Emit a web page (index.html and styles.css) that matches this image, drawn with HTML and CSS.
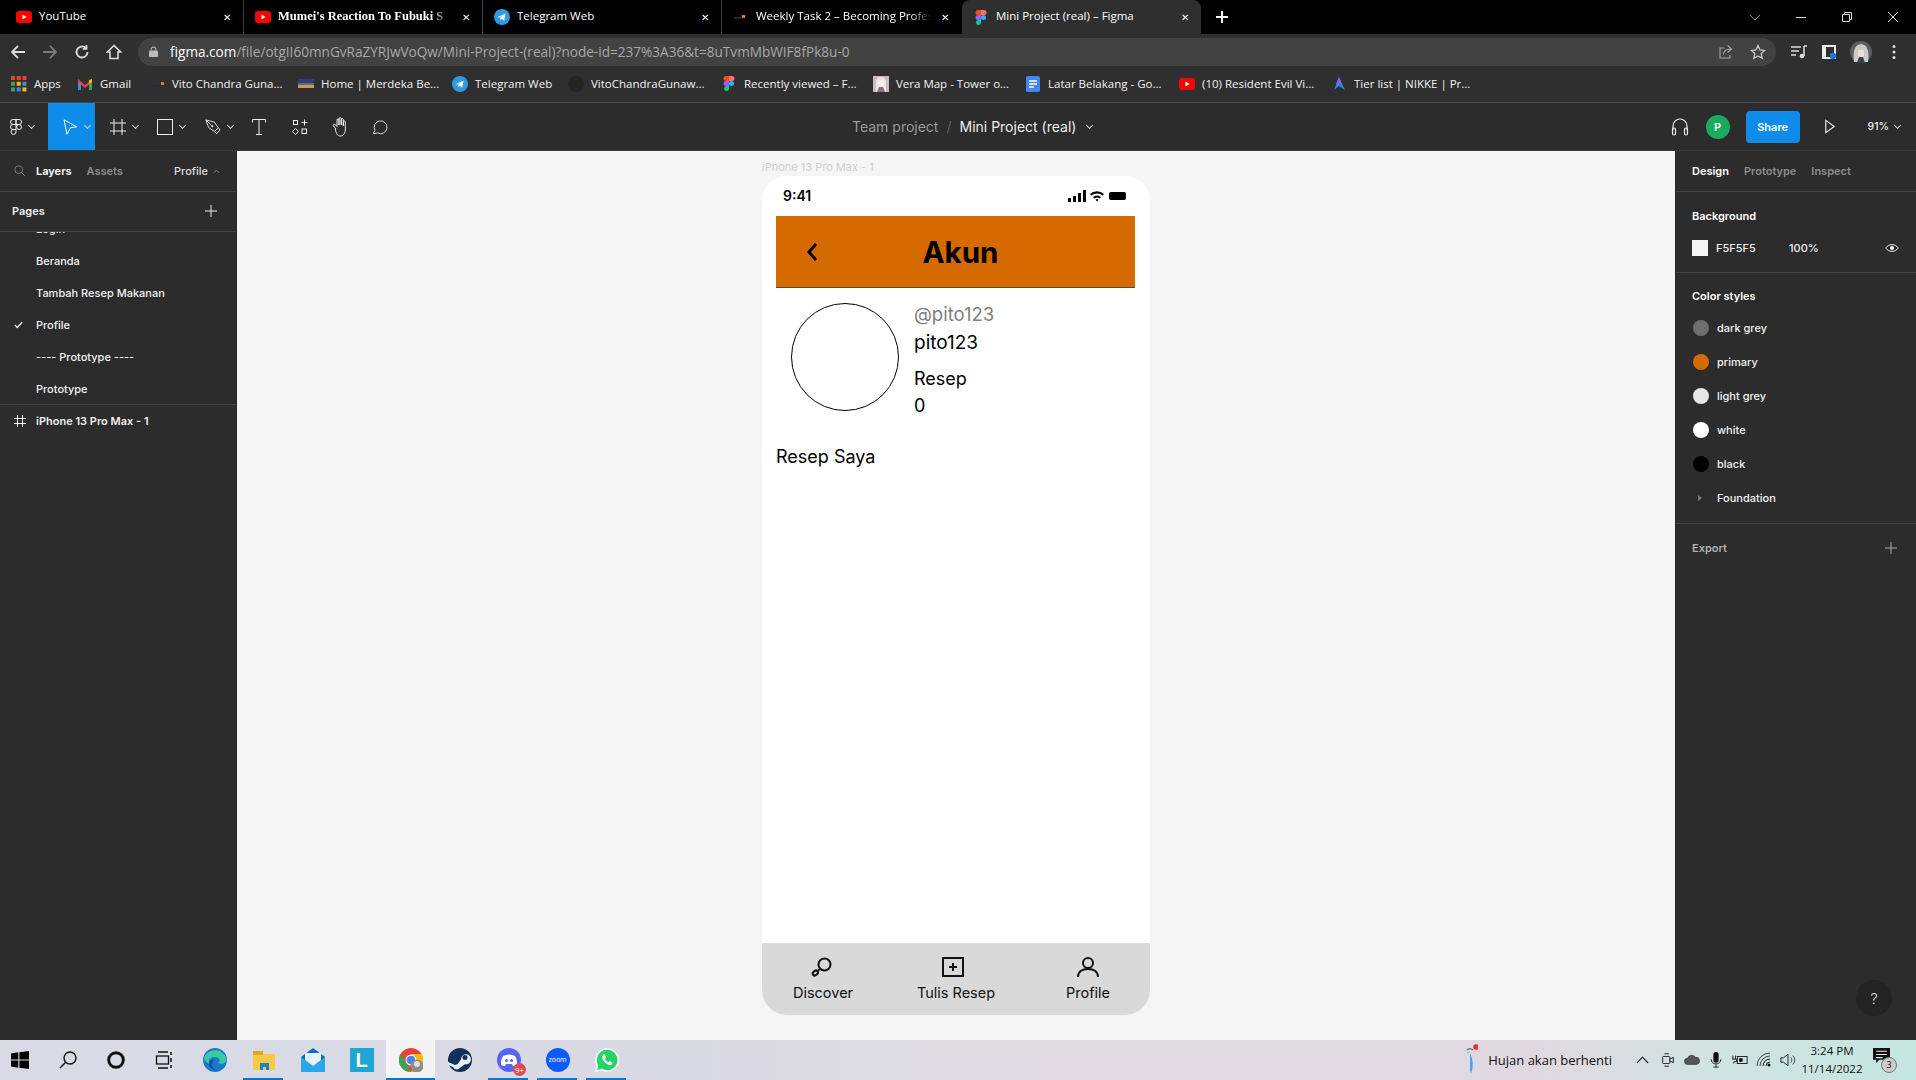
FILE: index.html
```html
<!DOCTYPE html>
<html lang="en">
<head>
  <meta charset="UTF-8" />
  <title>Mini Project (real) – Figma</title>
  <link rel="stylesheet" href="styles.css">
</head>
<body>
  <!-- browser tabs -->
  <div class="tabstrip">
    <div class="tab">
      <svg class="fav" viewBox="0 0 16 16"><rect y="2" width="16" height="12" rx="3" fill="#f00"/><path d="M6.500 5.500v5l4-2.500z" fill="#fff"/></svg>
      <span class="tab-title">YouTube</span><span class="tab-x">✕</span>
    </div>
    <div class="tab">
      <svg class="fav" viewBox="0 0 16 16"><rect y="2" width="16" height="12" rx="3" fill="#f00"/><path d="M6.500 5.500v5l4-2.500z" fill="#fff"/></svg>
      <span class="tab-title tab-title-serif tab-fade">Mumei's Reaction To Fubuki S</span><span class="tab-x">✕</span>
    </div>
    <div class="tab">
      <svg class="fav" viewBox="0 0 16 16"><circle cx="8" cy="8" r="8" fill="#2f9be3"/><path d="M3.500 8l8-3.300-1.300 7-2.500-1.800-1.200 1.200-.3-2.300 3.300-2.800-4.200 2.600z" fill="#fff"/></svg>
      <span class="tab-title">Telegram Web</span><span class="tab-x">✕</span>
    </div>
    <div class="tab tab-last">
      <svg class="fav" viewBox="0 0 16 16"><rect x="1" y="8" width="7" height="1.500" fill="#2b3350"/><rect x="9" y="6" width="3" height="3" fill="#e8762c"/></svg>
      <span class="tab-title tab-fade">Weekly Task 2 – Becoming Profes</span><span class="tab-x">✕</span>
    </div>
    <div class="tab tab-active">
      <svg class="fav" viewBox="0 0 16 16"><path d="M5 1h3v5H5a2.500 2.500 0 0 1 0-5z" fill="#f24e1e"/><path d="M8 1h3a2.500 2.500 0 0 1 0 5H8z" fill="#ff7262"/><path d="M5 6h3v5H5a2.500 2.500 0 0 1 0-5z" fill="#a259ff"/><circle cx="10.500" cy="8.500" r="2.500" fill="#1abcfe"/><path d="M5 11h3v2.500a2.500 2.500 0 1 1-3-2.500z" fill="#0acf83"/></svg>
      <span class="tab-title">Mini Project (real) – Figma</span><span class="tab-x">✕</span>
    </div>
    <svg class="tab-plus" viewBox="0 0 14 14"><path d="M7 1v12M1 7h12" stroke="#fff" stroke-width="2"/></svg>
    <div class="win-btns">
      <svg viewBox="0 0 12 12"><path d="M1 4l5 5 5-5" fill="none" stroke="#888" stroke-width="1"/></svg>
      <svg viewBox="0 0 12 12"><path d="M1 6.500h10" stroke="#ddd" stroke-width="1"/></svg>
      <svg viewBox="0 0 12 12"><path d="M1.500 3.500h7v7h-7zM3.500 3.500v-2h7v7h-2" fill="none" stroke="#ddd" stroke-width="1"/></svg>
      <svg viewBox="0 0 12 12"><path d="M1 1l10 10M11 1L1 11" stroke="#ddd" stroke-width="1"/></svg>
    </div>
  </div>

  <!-- address bar -->
  <div class="navbar">
    <div class="nav-btns">
      <svg viewBox="0 0 16 16"><path d="M15 8H2M8 2L2 8l6 6" fill="none" stroke="#dcdcdc" stroke-width="1.800"/></svg>
      <svg viewBox="0 0 16 16"><path d="M1 8h13M8 2l6 6-6 6" fill="none" stroke="#7a7a7a" stroke-width="1.800"/></svg>
      <svg viewBox="0 0 16 16"><path d="M13.500 8a5.500 5.500 0 1 1-1.700-4M12.500 1v3.800H8.700" fill="none" stroke="#dcdcdc" stroke-width="1.800"/></svg>
      <svg viewBox="0 0 16 16"><path d="M8 1.500L1.500 8H4v6.500h8V8h2.500z" fill="none" stroke="#dcdcdc" stroke-width="1.600"/></svg>
    </div>
    <div class="omnibox">
      <svg class="lock" viewBox="0 0 10 12"><rect y="5" width="10" height="7" rx="1" fill="#bbb"/><path d="M2.500 5V3.500a2.500 2.500 0 0 1 5 0V5" fill="none" stroke="#bbb" stroke-width="1.200"/></svg>
      <span class="url"><b>figma.com</b>/file/otgII60mnGvRaZYRJwVoQw/Mini-Project-(real)?node-id=237%3A36&amp;t=8uTvmMbWIF8fPk8u-0</span>
      <svg class="omni-ico" viewBox="0 0 16 16"><path d="M6 4H2v10h10v-3M5.500 10.500c0-3.500 3-5.500 7.500-5.500M9.500 1.500L13.500 5l-4 3.500" fill="none" stroke="#aaa" stroke-width="1.100"/></svg>
      <svg class="omni-ico" viewBox="0 0 16 16"><path d="M8 1.500l2 4.400 4.700.5-3.500 3.200 1 4.700L8 11.900l-4.200 2.400 1-4.700L1.300 6.400 6 5.900z" fill="none" stroke="#ccc" stroke-width="1.300"/></svg>
    </div>
    <div class="nav-right">
      <svg viewBox="0 0 16 16"><path d="M0 3h10M0 7h8M0 11h5M13 2v10M13 2h3" fill="none" stroke="#ddd" stroke-width="1.500"/><circle cx="11" cy="12" r="2.300" fill="#ddd"/></svg>
      <svg viewBox="0 0 16 16"><path d="M1 1h14v14H1z" fill="#eee"/><path d="M5 3h8v7H9v3H5z" fill="#2f2f2f"/><circle cx="12" cy="12" r="3.200" fill="#1a73e8"/></svg>
      <svg class="user-pic" viewBox="0 0 22 22"><circle cx="11" cy="11" r="11" fill="#5c5f60"/><path d="M4 21c-1-8-1-17 7-18 8 1 8 10 7 18z" fill="#c9cccb"/><path d="M8 9h6v6l-3 2-3-2z" fill="#f0dcd2"/><path d="M7 22l2-6h4l2 6z" fill="#3b3f48"/></svg>
      <svg viewBox="0 0 16 16"><circle cx="8" cy="2.500" r="1.500" fill="#ddd"/><circle cx="8" cy="8" r="1.500" fill="#ddd"/><circle cx="8" cy="13.500" r="1.500" fill="#ddd"/></svg>
    </div>
  </div>

  <!-- bookmarks -->
  <div class="bookmarks">
    <div class="bm"><svg viewBox="0 0 14 14"><g fill="#ea4335"><rect width="3.500" height="3.500"/><rect x="5" width="3.500" height="3.500"/><rect x="10" width="3.500" height="3.500"/></g><rect y="5" width="3.500" height="3.500" fill="#34a853"/><rect x="5" y="5" width="3.500" height="3.500" fill="#fbbc04"/><rect x="10" y="5" width="3.500" height="3.500" fill="#4285f4"/><rect y="10" width="3.500" height="3.500" fill="#34a853"/><rect x="5" y="10" width="3.500" height="3.500" fill="#4285f4"/><rect x="10" y="10" width="3.500" height="3.500" fill="#fbbc04"/></svg>Apps</div>
    <div class="bm"><svg viewBox="0 0 16 16"><path d="M1 3v11h3V7z" fill="#4285f4"/><path d="M15 3v11h-3V7z" fill="#34a853"/><path d="M1 3l7 6 7-6v3l-7 6-7-6z" fill="#ea4335"/><path d="M12 4l3-1v3l-3 2z" fill="#fbbc04"/></svg>Gmail</div>
    <div class="bm"><svg viewBox="0 0 16 16"><rect x="0" y="9" width="10" height="1.200" fill="#232b4a"/><rect x="12" y="6" width="3" height="3" fill="#e8762c"/></svg>Vito Chandra Guna...</div>
    <div class="bm"><svg viewBox="0 0 16 16"><rect y="3" width="16" height="4" fill="#2f3f72"/><rect y="7" width="16" height="2" fill="#5b6c92"/><rect y="9" width="16" height="3" fill="#c9995a"/></svg>Home | Merdeka Be...</div>
    <div class="bm"><svg viewBox="0 0 16 16"><circle cx="8" cy="8" r="8" fill="#2f9be3"/><path d="M3.500 8l8-3.300-1.300 7-2.500-1.800-1.200 1.200-.3-2.300 3.300-2.800-4.200 2.600z" fill="#fff"/></svg>Telegram Web</div>
    <div class="bm"><svg viewBox="0 0 16 16"><circle cx="8" cy="8" r="8" fill="#242424"/></svg>VitoChandraGunaw...</div>
    <div class="bm"><svg viewBox="0 0 16 16"><path d="M5 0h3v5H5a2.500 2.500 0 0 1 0-5z" fill="#f24e1e"/><path d="M8 0h3a2.500 2.500 0 0 1 0 5H8z" fill="#ff7262"/><path d="M5 5h3v5H5a2.500 2.500 0 0 1 0-5z" fill="#a259ff"/><circle cx="10.500" cy="7.500" r="2.500" fill="#1abcfe"/><path d="M5 10h3v3a2.500 2.500 0 1 1-3-3z" fill="#0acf83"/></svg>Recently viewed – F...</div>
    <div class="bm"><svg viewBox="0 0 16 16"><rect width="16" height="16" fill="#c9bcc6"/><path d="M3 16V6a5 5 0 0 1 10 0v10z" fill="#efe3e2"/><circle cx="8" cy="7" r="3" fill="#fbeeea"/><path d="M4 16l2-5h4l2 5z" fill="#8d6f82"/></svg>Vera Map - Tower o...</div>
    <div class="bm"><svg viewBox="0 0 16 16"><rect x="1" width="14" height="16" rx="1.500" fill="#4285f4"/><path d="M4 5h8M4 8h8M4 11h5" stroke="#fff" stroke-width="1.500"/></svg>Latar Belakang - Go...</div>
    <div class="bm"><svg viewBox="0 0 16 16"><rect y="2" width="16" height="12" rx="3" fill="#f00"/><path d="M6.500 5.500v5l4-2.500z" fill="#fff"/></svg>(10) Resident Evil Vi...</div>
    <div class="bm"><svg viewBox="0 0 16 16"><path d="M8 1l6 13-6-4-5 4z" fill="#1c8fe3"/><path d="M8 1L5 8l3-1 2.500 1z" fill="#b04fd8"/></svg>Tier list | NIKKE | Pr...</div>
  </div>

  <!-- figma toolbar -->
  <div class="figbar">
    <div class="tools">
      <div class="tool tool-menu"><svg viewBox="0 0 12 16"><g fill="none" stroke="#eee" stroke-width="1"><path d="M3 .5h3v5H3a2.500 2.500 0 0 1 0-5zM6 .5h3a2.500 2.500 0 0 1 0 5H6zM3 5.500h3v5H3a2.500 2.500 0 0 1 0-5z"/><circle cx="9" cy="8" r="2.500"/><path d="M3 10.500h3v2.500a2.500 2.500 0 1 1-3-2.500z"/></g></svg><i class="caret"></i></div>
      <div class="tool tool-on"><svg viewBox="0 0 16 16"><path d="M2 .8l12.500 7-6 .9L5 15.200z" fill="none" stroke="#fff" stroke-width="1"/></svg><i class="caret"></i></div>
      <div class="tool"><svg viewBox="0 0 16 16"><path d="M4 0v16M12 0v16M0 4h16M0 12h16" stroke="#eee" stroke-width="1"/></svg><i class="caret"></i></div>
      <div class="tool"><svg viewBox="0 0 16 16"><rect x=".5" y=".5" width="15" height="15" fill="none" stroke="#eee" stroke-width="1"/></svg><i class="caret"></i></div>
      <div class="tool"><svg viewBox="0 0 18 18"><path d="M1 1l9.500 2.500 4.500 6.500-4.500 4L4 9.500zM1 1l6.500 6.500M15 10l2 2.500-4 4-2.500-2.500" fill="none" stroke="#eee" stroke-width="1"/><circle cx="8.200" cy="8.200" r="1.200" fill="#eee"/></svg><i class="caret"></i></div>
      <div class="tool tool-plain"><svg viewBox="0 0 16 16"><path d="M1.500 3.500V.5h13v3M8 .5v15M5 15.500h6" fill="none" stroke="#eee" stroke-width="1"/></svg></div>
      <div class="tool tool-plain"><svg viewBox="0 0 16 16"><g fill="none" stroke="#eee" stroke-width="1"><rect x="1.500" y="1.500" width="4" height="4"/><path d="M12.500 .5v6M9.500 3.500h6M3.500 9.500l3 3-3 3-3-3z"/><rect x="10" y="10" width="4.500" height="4.500"/></g></svg></div>
      <div class="tool tool-plain tool-hand"><svg viewBox="0 0 18 20"><path d="M4 12L1.500 9c-1-1.500 1-2.500 2-1.200L5 9.500V3c0-1.600 2-1.600 2 0v5V1.800c0-1.600 2.200-1.600 2.200 0V8V2.800c0-1.600 2.100-1.600 2.100 0V9V5c0-1.500 2-1.500 2 0v8c0 3-2 6-5 6-3 0-3.600-2-5.300-7z" fill="none" stroke="#eee" stroke-width="1"/></svg></div>
      <div class="tool tool-plain tool-comment"><svg viewBox="0 0 18 18"><path d="M1.500 16.500l1.800-3.800a7.200 7.200 0 1 1 3 3z" fill="none" stroke="#eee" stroke-width="1"/></svg></div>
    </div>
    <div class="crumbs"><span class="crumb-team">Team project</span><span class="crumb-sep">/</span><span>Mini Project (real)</span><i class="caret"></i></div>
    <div class="fig-right">
      <svg class="headset" viewBox="0 0 18 20"><path d="M2 13V9a7 7 0 0 1 14 0v4" fill="none" stroke="#eee" stroke-width="1.200"/><rect x="1.500" y="11" width="3" height="7" rx="1.500" fill="none" stroke="#eee" stroke-width="1.200"/><rect x="13.500" y="11" width="3" height="7" rx="1.500" fill="none" stroke="#eee" stroke-width="1.200"/></svg>
      <span class="avatar-p">P</span>
      <span class="share">Share</span>
      <svg class="play" viewBox="0 0 12 16"><path d="M1.500 1.500l9 6.500-9 6.500z" fill="none" stroke="#eee" stroke-width="1.200"/></svg>
      <span class="zoom-pct">91%</span><i class="caret"></i>
    </div>
  </div>

  <div class="workspace">
    <!-- left panel -->
    <aside class="left-panel">
      <div class="panel-tabs">
        <svg class="search" viewBox="0 0 14 14"><circle cx="5.500" cy="5.500" r="4.500" fill="none" stroke="#888"/><path d="M9 9l4 4" stroke="#888"/></svg>
        <span class="ptab ptab-on">Layers</span><span class="ptab">Assets</span>
        <span class="page-pick">Profile<svg viewBox="0 0 8 5"><path d="M1 4l3-3 3 3" fill="none" stroke="#888"/></svg></span>
      </div>
      <div class="pages-head"><span>Pages</span><svg viewBox="0 0 12 12"><path d="M6 0v12M0 6h12" stroke="#eee"/></svg></div>
      <ul class="pages">
        <li>Login</li>
        <li>Beranda</li>
        <li>Tambah Resep Makanan</li>
        <li class="page-on"><svg viewBox="0 0 10 8"><path d="M1 4l2.700 2.700L9 1" fill="none" stroke="#eee" stroke-width="1.500"/></svg>Profile</li>
        <li>---- Prototype ----</li>
        <li>Prototype</li>
      </ul>
      <div class="layer"><svg viewBox="0 0 12 12"><path d="M3.500 0v12M8.500 0v12M0 3.500h12M0 8.500h12" stroke="#eee"/></svg>iPhone 13 Pro Max - 1</div>
    </aside>

    <!-- canvas -->
    <main class="canvas">
      <div class="frame-label">iPhone 13 Pro Max - 1</div>
      <div class="phone">
        <div class="status">
          <span class="clock">9:41</span>
          <svg class="status-ico" viewBox="0 0 58 12"><rect y="8" width="3" height="4" rx=".5"/><rect x="5" y="6" width="3" height="6" rx=".5"/><rect x="10" y="3" width="3" height="9" rx=".5"/><rect x="15" y="0" width="3" height="12" rx=".5"/><path d="M22 4a10 10 0 0 1 14 0l-1.500 1.600a8 8 0 0 0-11 0zM25 7a6 6 0 0 1 8 0l-1.500 1.600a3.800 3.800 0 0 0-5 0zM27.500 9.800a2 2 0 0 1 3 0L29 11.500z"/><rect x="41" y="2" width="17" height="8" rx="2"/></svg>
        </div>
        <header class="app-head">
          <svg class="back" viewBox="0 0 12 20"><path d="M10 2L3 10l7 8" fill="none" stroke="#000" stroke-width="3"/></svg>
          <h1>Akun</h1>
        </header>
        <section class="profile">
          <div class="avatar"></div>
          <div class="info">
            <div class="handle">@pito123</div>
            <div class="name">pito123</div>
            <div class="stat-label">Resep</div>
            <div class="stat-val">0</div>
          </div>
        </section>
        <div class="my-recipes">Resep Saya</div>
        <nav class="tabbar">
          <div class="tabbar-item item-discover"><svg viewBox="0 0 22 20"><circle cx="13.500" cy="7.500" r="6" fill="none" stroke="#111" stroke-width="2"/><path d="M9 12l-2.500 2" stroke="#111" stroke-width="2"/><rect x="1.500" y="14.200" width="5.500" height="4" rx="2" transform="rotate(-40 4 16)" fill="none" stroke="#111" stroke-width="2"/></svg>Discover</div>
          <div class="tabbar-item item-write"><svg viewBox="0 0 22 20"><rect x="1" y="1" width="20" height="18" fill="none" stroke="#111" stroke-width="2"/><path d="M11 6v8M7 10h8" stroke="#111" stroke-width="2"/></svg>Tulis Resep</div>
          <div class="tabbar-item"><svg viewBox="0 0 22 20"><circle cx="11" cy="6" r="5" fill="none" stroke="#111" stroke-width="2"/><path d="M1 20c0-5 4-8 10-8s10 3 10 8" fill="none" stroke="#111" stroke-width="2"/></svg>Profile</div>
        </nav>
      </div>
    </main>

    <!-- right panel -->
    <aside class="right-panel">
      <div class="panel-tabs panel-tabs-right">
        <span class="ptab ptab-on">Design</span><span class="ptab">Prototype</span><span class="ptab">Inspect</span>
      </div>
      <section class="bg-section">
        <h3>Background</h3>
        <div class="bg-row">
          <span class="bg-swatch"></span><span class="bg-hex">F5F5F5</span><span class="bg-pct">100%</span>
          <svg class="eye" viewBox="0 0 14 10"><path d="M.7 5C3.700.5 10.300.5 13.300 5 10.300 9.500 3.700 9.500.7 5z" fill="none" stroke="#eee"/><circle cx="7" cy="5" r="2" fill="#eee"/></svg>
        </div>
      </section>
      <section class="styles-section">
        <h3>Color styles</h3>
        <div class="style-row"><span class="dot dot-dark"></span>dark grey</div>
        <div class="style-row"><span class="dot dot-primary"></span>primary</div>
        <div class="style-row"><span class="dot dot-light"></span>light grey</div>
        <div class="style-row"><span class="dot dot-white"></span>white</div>
        <div class="style-row"><span class="dot dot-black"></span>black</div>
        <div class="style-row"><span class="tri"></span>Foundation</div>
      </section>
      <section class="export-section"><h3>Export</h3><svg viewBox="0 0 12 12"><path d="M6 0v12M0 6h12" stroke="#aaa"/></svg></section>
      <div class="help">?</div>
    </aside>
  </div>

  <!-- windows taskbar -->
  <footer class="taskbar">
    <div class="task task-start"><svg viewBox="0 0 16 16"><path d="M0 2.200l6.500-1v6.300H0zM7.500 1l8.500-1v7.500H7.500zM0 8.500h6.500v6.300l-6.500-1zM7.500 8.500H16V16l-8.500-1.200z" fill="#000"/></svg></div>
    <div class="task task-sys"><svg viewBox="0 0 18 18"><circle cx="11" cy="7" r="6" fill="none" stroke="#111" stroke-width="1.400"/><path d="M6.500 11.500L1 17" stroke="#111" stroke-width="1.400"/></svg></div>
    <div class="task task-sys"><svg viewBox="0 0 16 16"><circle cx="8" cy="8" r="6.500" fill="none" stroke="#111" stroke-width="2.600"/></svg></div>
    <div class="task task-sys task-sys-last"><svg viewBox="0 0 18 18"><path d="M3 1h10M3 17h10" stroke="#111" stroke-width="1.300"/><rect x="1.500" y="5" width="12" height="8" fill="none" stroke="#111" stroke-width="1.300"/><path d="M16 1v3M16 7v4M16 14v3" stroke="#111" stroke-width="1.500"/></svg></div>
    <div class="task"><svg class="big" viewBox="0 0 24 24"><circle cx="12" cy="12" r="12" fill="#1b79c9"/><path d="M1 10C3 2 17-2 23 9c2 5-3 8-8 6 3-2 2-6-3-6-5 0-7 3-6 7C3 14 1 12 1 10z" fill="#3cc6a4"/><path d="M6 17c1 4 6 6 11 5-5 1-8-2-8-6 0-3 2-5 3-5-3 0-6 2-6 6z" fill="#0c4f96"/></svg></div>
    <div class="task task-open"><svg class="big" viewBox="0 0 24 24"><path d="M1 4h9l2 2h11v16H1z" fill="#f7ca45"/><rect x="1" y="3" width="10" height="4" fill="#e2a52a"/><path d="M8 22v-7h9v7h-3v-3h-3v3z" fill="#1d7fd1"/></svg></div>
    <div class="task"><svg class="big" viewBox="0 0 24 24"><path d="M0 9L12 0l12 9v15H0z" fill="#0a6cc4"/><path d="M0 9l12 9 12-9v15H0z" fill="#28a8ea"/><path d="M4 5h16v7l-8 6-8-6z" fill="#e8f4fb"/></svg></div>
    <div class="task"><span class="l-app">L</span></div>
    <div class="task task-active task-open"><svg class="big" viewBox="0 0 24 24"><circle cx="12" cy="12" r="12" fill="#ea4335"/><path d="M12 24A12 12 0 0 1 1.600 6l6 10.500z" fill="#34a853"/><path d="M12 6h10.400A12 12 0 0 1 12 24l6-10z" fill="#fbbc04"/><circle cx="12" cy="12" r="5.500" fill="#fff"/><circle cx="12" cy="12" r="4.300" fill="#4285f4"/><circle cx="18" cy="18" r="6.500" fill="#8d8d8a"/><circle cx="18" cy="16" r="3" fill="#ddd"/></svg></div>
    <div class="task"><svg class="big" viewBox="0 0 24 24"><circle cx="12" cy="12" r="12" fill="#12315a"/><path d="M0 14l7 3a4 4 0 0 1 2.500-.8l3.500-5a5 5 0 1 1 4 5l-5 3.500A4 4 0 0 1 5 19l-5-2z" fill="#e6edf3"/><circle cx="17" cy="9.500" r="2.500" fill="#12315a"/></svg></div>
    <div class="task task-open"><svg class="big" viewBox="0 0 24 24"><circle cx="12" cy="12" r="12" fill="#5865f2"/><path d="M6 8c4-2 8-2 12 0 2 3 2 6 2 9-2 1-3 1-4 1l-1-2H9l-1 2c-1 0-2 0-4-1 0-3 0-6 2-9z" fill="#fff"/><circle cx="9.500" cy="12.500" r="1.500" fill="#5865f2"/><circle cx="14.500" cy="12.500" r="1.500" fill="#5865f2"/></svg><span class="task-badge">9+</span></div>
    <div class="task task-open"><span class="zoom-app">zoom</span></div>
    <div class="task task-open"><svg class="big" viewBox="0 0 24 24"><path d="M12 1a11 11 0 0 0-9.500 16.500L1 23l5.700-1.500A11 11 0 1 0 12 1z" fill="#25d366" stroke="#fff" stroke-width="1.500"/><path d="M8.500 6.500c-1.500 1-2 3 0 6s5 5 7 4.500 2-2 1.800-2.500l-2.800-1.500-1 1.300c-1.500-.5-3-2-3.700-3.500l1.200-1L10 6.700c-.5-.6-1-.5-1.500-.2z" fill="#fff"/></svg></div>
    <div class="tray">
      <div class="weather"><svg viewBox="0 0 14 32"><path d="M3 6a4 4 0 0 1 6 0" fill="none" stroke="#777" stroke-width="1.500"/><path d="M2 9c3-1 4 0 4 0v17l1 4 1-4c2-5 0-13-2-17z" fill="#45a5ee"/><circle cx="12" cy="3" r="2.800" fill="#e03131"/></svg><span>Hujan akan berhenti</span></div>
      <svg class="t-ico t-caret" viewBox="0 0 14 8"><path d="M1 7l6-6 6 6" fill="none" stroke="#111" stroke-width="1.200"/></svg>
      <svg class="t-ico" viewBox="0 0 14 18"><rect x="1" y="5" width="8" height="8" rx="1" fill="none" stroke="#111"/><path d="M9 8l4-2v6l-4-2M3 2h5M3 16h5" fill="none" stroke="#111"/></svg>
      <svg class="t-ico" viewBox="0 0 18 12"><path d="M4 11a3.500 3.500 0 0 1 0-7 5 5 0 0 1 9-1 4 4 0 0 1 1 8z" fill="#555" stroke="#222" stroke-width=".6"/></svg>
      <svg class="t-ico" viewBox="0 0 14 18"><rect x="4" y="0" width="6" height="12" rx="3" fill="#111"/><path d="M1.500 8a5.500 5.500 0 0 0 11 0M7 14v3M4 17h6" fill="none" stroke="#111"/></svg>
      <svg class="t-ico" viewBox="0 0 18 14"><rect x="6" y="3" width="11" height="8" fill="none" stroke="#111"/><rect x="8" y="5" width="4" height="4" fill="#111"/><path d="M1 2v4M4 2v4M0 6h5v3H2v2" fill="none" stroke="#111"/></svg>
      <svg class="t-ico" viewBox="0 0 16 16"><path d="M1 14a13 13 0 0 1 13-13M4 14a10 10 0 0 1 10-10" fill="none" stroke="#444"/><path d="M7 14a7 7 0 0 1 7-7M10 14a4 4 0 0 1 4-4" fill="none" stroke="#111"/><circle cx="13" cy="13" r="1.500" fill="#111"/></svg>
      <svg class="t-ico" viewBox="0 0 18 16"><path d="M1 5.500h3L9 1.500v13l-5-4H1z" fill="none" stroke="#111"/><path d="M12 5a4 4 0 0 1 0 6M14.500 3a7 7 0 0 1 0 10" fill="none" stroke="#333"/></svg>
      <div class="datetime"><span>3:24 PM</span><span>11/14/2022</span></div>
      <div class="notif"><svg viewBox="0 0 16 15"><path d="M0 0h16v11H6l-3 3v-3H0z" fill="#111"/><path d="M3 3h10M3 6h10M3 9h6" stroke="#eee"/></svg><span class="notif-count">3</span></div>
    </div>
  </footer>
</body>
</html>
```

FILE: styles.css
```css
* {
  box-sizing: border-box;
}

html, body {
  height: 100%;
}

body {
  margin: 0;
  height: 1080px;
  overflow: hidden;
  display: flex;
  flex-direction: column;
  font-family: "Open Sans", sans-serif;
  background-color: #2c2c2c;
  color: #eee;
}

/* browser chrome */
.tabstrip {
  height: 34px;
  flex: none;
  background: #000;
  display: flex;
  align-items: stretch;
  padding-left: 5px;
}

.tab {
  width: 239px;
  flex: none;
  display: flex;
  align-items: center;
  padding: 0 9px 0 11px;
  gap: 7px;
  font-size: 11.500px;
  color: #fff;
  border-right: 1px solid #3a3a3a;
}

.tab-last {
  border-right: 0;
}

.tab-active {
  background: #2f2f2f;
  border-right: 0;
  border-radius: 8px 8px 0 0;
  margin-left: 1px;
}

.fav {
  width: 16px;
  height: 16px;
  flex: none;
}

.tab-title {
  flex: 1;
  min-width: 0;
  white-space: nowrap;
  line-height: 16px;
  margin-top: -2px;
}

.tab-fade {
  -webkit-mask-image: linear-gradient(90deg, #000 88%, transparent 100%);
  mask-image: linear-gradient(90deg, #000 88%, transparent 100%);
}

.tab-title-serif {
  font-family: "Liberation Serif", serif;
  font-weight: bold;
  font-size: 12.500px;
}

.tab-x {
  font-size: 10px;
  width: 14px;
  text-align: center;
}

.tab-plus {
  width: 14px;
  height: 14px;
  align-self: center;
  margin-left: 14px;
}

.win-btns {
  margin-left: auto;
  display: flex;
  align-items: center;
  gap: 34px;
  padding-right: 17px;
}

.win-btns svg {
  width: 12px;
  height: 12px;
}

.navbar {
  height: 34px;
  flex: none;
  background: #2f2f2f;
  display: flex;
  align-items: center;
  padding-top: 1px;
}

.nav-btns {
  width: 138px;
  flex: none;
  display: flex;
  gap: 16px;
  padding-left: 10px;
}

.nav-btns svg {
  width: 16px;
  height: 16px;
}

.omnibox {
  width: 1638px;
  height: 28px;
  flex: none;
  background: #424242;
  border-radius: 14px;
  display: flex;
  align-items: center;
  padding: 0 10px 0 11px;
}

.lock {
  width: 9px;
  height: 11px;
  margin-right: 12px;
}

.url {
  flex: 1;
  font-size: 13.600px;
  color: #a8a8a8;
  white-space: nowrap;
}

.url b {
  font-weight: 400;
  color: #fff;
}

.omni-ico {
  width: 16px;
  height: 16px;
  margin-left: 16px;
}

.nav-right {
  flex: 1;
  display: flex;
  align-items: center;
  justify-content: space-between;
  padding: 0 14px 0 15px;
}

.nav-right svg {
  width: 16px;
  height: 16px;
}

.nav-right .user-pic {
  width: 22px;
  height: 22px;
}

.bookmarks {
  height: 34px;
  flex: none;
  background: #2f2f2f;
  display: grid;
  grid-template-columns: 66px 72px 149px 154px 116px 153px 152px 152px 154px 152px 200px;
  padding: 0 0 3px 11px;
  align-items: center;
}

.bm {
  display: flex;
  align-items: center;
  gap: 7px;
  font-size: 11.500px;
  color: #f1f1f1;
  white-space: nowrap;
}

.bm svg {
  width: 16px;
  height: 16px;
  flex: none;
}

/* figma toolbar */
.figbar {
  height: 49px;
  flex: none;
  background: #2c2c2c;
  border-top: 1px solid #4a4a4a;
  border-bottom: 1px solid #3a3a3a;
  display: flex;
  align-items: stretch;
  position: relative;
  font-family: Inter, sans-serif;
}

.tools {
  display: flex;
  width: 400px;
}

.tool {
  width: 48px;
  display: flex;
  align-items: center;
  justify-content: center;
  gap: 7px;
  padding-left: 10px;
}

.tool svg {
  width: 16px;
  height: 16px;
}

.tool-menu {
  padding: 0 5px 0 0;
  gap: 5px;
}

.tool-on {
  background: #0d8ce9;
}

.tool-plain {
  width: 41px;
  padding-left: 2px;
}

.tool-hand {
  padding-left: 4px;
}

.tool-comment {
  padding-left: 0;
}

.tool-hand svg {
  width: 18px;
  height: 20px;
}

.caret {
  width: 5px;
  height: 5px;
  border-right: 1px solid #ccc;
  border-bottom: 1px solid #ccc;
  transform: rotate(45deg);
  margin-top: -2px;
  flex: none;
}

.crumbs {
  margin-left: 452px;
  display: flex;
  align-items: center;
  font-size: 14px;
  color: #eee;
  white-space: nowrap;
}

.crumb-team {
  color: #9a9a9a;
}

.crumb-sep {
  color: #666;
  margin: 0 8px;
}

.crumbs .caret {
  margin-left: 11px;
}

.fig-right {
  margin-left: auto;
  display: flex;
  align-items: center;
  padding-right: 16px;
}

.headset {
  width: 18px;
  height: 20px;
}

.avatar-p {
  width: 24px;
  height: 24px;
  border-radius: 50%;
  background: #1bab5f;
  font-size: 11px;
  font-weight: 600;
  color: #fff;
  display: flex;
  align-items: center;
  justify-content: center;
  margin-left: 17px;
}

.share {
  width: 54px;
  height: 32px;
  background: #0d8ce9;
  border-radius: 4px;
  font-size: 11px;
  font-weight: 600;
  color: #fff;
  display: flex;
  align-items: center;
  justify-content: center;
  margin-left: 16px;
}

.play {
  width: 12px;
  height: 15px;
  margin-left: 24px;
}

.zoom-pct {
  font-size: 10.500px;
  font-weight: 500;
  margin-left: 32px;
  margin-right: 6px;
}

/* panels */
.workspace {
  flex: 1;
  display: flex;
  min-height: 0;
  font-family: Inter, sans-serif;
}

.left-panel {
  width: 237px;
  flex: none;
  background: #2c2c2c;
  border-right: 1px solid #252525;
}

.panel-tabs {
  height: 41px;
  display: flex;
  align-items: center;
  padding-left: 14px;
  border-bottom: 1px solid #444;
  font-size: 11px;
  font-weight: 600;
}

.search {
  width: 12px;
  height: 12px;
  margin-right: 10px;
}

.ptab {
  color: #8d8d8d;
  margin-right: 15px;
}

.ptab-on {
  color: #fff;
}

.page-pick {
  margin-left: auto;
  margin-right: 16px;
  display: flex;
  align-items: center;
  gap: 5px;
  color: #ddd;
  font-weight: 500;
}

.page-pick svg {
  width: 7px;
  height: 5px;
}

.pages-head {
  height: 40px;
  display: flex;
  align-items: center;
  justify-content: space-between;
  padding: 0 19px 2px 12px;
  border-bottom: 1px solid #444;
  font-size: 11px;
  font-weight: 600;
}

.pages-head svg {
  width: 12px;
  height: 12px;
}

.pages {
  list-style: none;
  margin: 0;
  padding: 0;
  height: 173px;
  overflow: hidden;
  border-bottom: 1px solid #444;
}

.pages li {
  height: 32px;
  display: flex;
  align-items: center;
  padding-left: 36px;
  font-size: 11px;
  font-weight: 500;
  color: #f2f2f2;
  position: relative;
}

.pages li:first-child {
  margin-top: -19px;
}

.page-on {
  font-weight: 600;
}

.page-on svg {
  position: absolute;
  left: 14px;
  width: 9px;
  height: 8px;
}

.layer {
  height: 32px;
  display: flex;
  align-items: center;
  padding-left: 14px;
  gap: 10px;
  font-size: 11px;
  font-weight: 600;
}

.layer svg {
  width: 12px;
  height: 12px;
}

.right-panel {
  width: 241px;
  flex: none;
  background: #2c2c2c;
  border-left: 1px solid #252525;
  font-size: 11px;
  position: relative;
}

.panel-tabs-right {
  padding-left: 16px;
}

.right-panel h3 {
  margin: 0;
  font-size: 11px;
  font-weight: 600;
  color: #fff;
}

.bg-section {
  height: 81px;
  padding: 17px 16px 0;
  border-bottom: 1px solid #444;
}

.bg-row {
  display: flex;
  align-items: center;
  margin-top: 17px;
  font-weight: 500;
}

.bg-swatch {
  width: 16px;
  height: 16px;
  background: #f5f5f5;
}

.bg-hex {
  margin-left: 8px;
  width: 73px;
}

.eye {
  width: 14px;
  height: 10px;
  margin-left: auto;
  margin-right: 1px;
}

.styles-section {
  height: 251px;
  padding: 16px 16px 0;
  border-bottom: 1px solid #444;
}

.style-row {
  height: 34px;
  display: flex;
  align-items: center;
  gap: 8px;
  font-weight: 500;
  color: #f2f2f2;
}

.styles-section h3 {
  margin-bottom: 8px;
}

.dot {
  width: 16px;
  height: 16px;
  border-radius: 50%;
  margin-left: 1px;
}

.dot-dark { background: #6f6f6f; }
.dot-primary { background: #d46a00; }
.dot-light { background: #e6e6e6; }
.dot-white { background: #fff; }
.dot-black { background: #000; }

.tri {
  width: 0;
  height: 0;
  margin: 0 7px 0 6px;
  border-left: 4px solid #777;
  border-top: 3px solid transparent;
  border-bottom: 3px solid transparent;
}

.export-section {
  height: 48px;
  display: flex;
  align-items: center;
  justify-content: space-between;
  padding: 0 19px 0 16px;
}

.right-panel .export-section h3 {
  color: #b0b0b0;
}

.export-section svg {
  width: 12px;
  height: 12px;
}

.help {
  position: absolute;
  right: 24px;
  bottom: 24px;
  width: 36px;
  height: 36px;
  border-radius: 50%;
  background: #232323;
  color: #ddd;
  font-size: 15px;
  font-weight: 300;
  display: flex;
  align-items: center;
  justify-content: center;
}

/* canvas and phone frame */
.canvas {
  flex: 1;
  background: #f5f5f5;
  padding: 0 0 25px 525px;
  display: flex;
  flex-direction: column;
  color: #000;
}

.frame-label {
  height: 25px;
  padding-top: 10px;
  font-size: 11px;
  line-height: 13px;
  color: #cfcfcf;
}

.phone {
  width: 388px;
  flex: 1;
  background: #fff;
  border-radius: 25px;
  display: flex;
  flex-direction: column;
  overflow: hidden;
}

.status {
  height: 40px;
  flex: none;
  display: flex;
  align-items: center;
  justify-content: space-between;
  padding: 0 24px 1px 21px;
}

.clock {
  font-size: 14px;
  font-weight: 600;
}

.status-ico {
  width: 58px;
  height: 12px;
  fill: #000;
}

.app-head {
  height: 72px;
  flex: none;
  margin: 0 15px 0 14px;
  background: #d46a00;
  border-bottom: 1px solid #5a4a3a;
  display: flex;
  align-items: center;
  justify-content: center;
  position: relative;
}

.app-head h1 {
  margin: 1px 0 0 10px;
  font-size: 29.500px;
  font-weight: 700;
}

.back {
  position: absolute;
  left: 30px;
  top: 26px;
  width: 12px;
  height: 20px;
}

.profile {
  display: flex;
  padding: 15px 0 0 29px;
  gap: 15px;
}

.avatar {
  width: 108px;
  height: 108px;
  border: 1px solid #000;
  border-radius: 50%;
  flex: none;
}

.info {
  font-size: 18px;
  line-height: 22px;
}

.handle {
  color: #808080;
  font-size: 18.500px;
}

.name {
  margin-top: 7px;
  font-size: 19px;
}

.stat-label {
  margin-top: 14px;
}

.stat-val {
  margin-top: 5px;
}

.my-recipes {
  margin: 29px 0 0 14px;
  font-size: 18px;
  line-height: 22px;
}

.tabbar {
  margin-top: auto;
  height: 72px;
  flex: none;
  background: #d9d9d9;
  display: grid;
  grid-template-columns: 122px 144px 120px;
  padding-top: 14px;
}

.tabbar-item {
  display: flex;
  flex-direction: column;
  align-items: center;
  font-size: 14.500px;
  line-height: 18px;
  gap: 7px;
  color: #111;
}

.tabbar-item svg {
  width: 22px;
  height: 20px;
}

.item-discover svg {
  margin-right: 3px;
}

.item-write svg {
  margin-right: 7px;
}

/* windows taskbar */
.taskbar {
  height: 40px;
  flex: none;
  display: flex;
  align-items: stretch;
  background: linear-gradient(90deg, #d8dbe6 0%, #d9d9e4 35%, #e0dbe0 60%, #e0d8e0 80%, #cfe3e0 90%, #c4e6e0 100%);
  color: #111;
  font-family: "Open Sans", sans-serif;
}

.task {
  width: 49px;
  flex: none;
  display: flex;
  align-items: center;
  justify-content: center;
  position: relative;
}

.task-start {
  width: 44px;
  padding-right: 4px;
}

.task-sys {
  width: 48px;
}

.task-sys-last {
  margin-right: 2px;
}

.task svg {
  width: 18px;
  height: 18px;
}

.task svg.big {
  width: 24px;
  height: 24px;
}

.task-open::after {
  content: "";
  position: absolute;
  left: 4px;
  right: 5px;
  bottom: 0;
  height: 2px;
  background: #0078d4;
}

.task-active {
  background: #f3f2f4;
}

.task-active::after {
  left: 0;
  right: 0;
}

.l-app {
  width: 24px;
  height: 24px;
  background: #1ea7d2;
  color: #fff;
  font: bold 20px/24px "Liberation Sans", sans-serif;
  text-align: center;
}

.zoom-app {
  width: 24px;
  height: 24px;
  border-radius: 50%;
  background: #0b5cff;
  color: #fff;
  font-size: 7px;
  line-height: 24px;
  text-align: center;
}

.task-badge {
  position: absolute;
  right: 7px;
  bottom: 4px;
  width: 13px;
  height: 13px;
  border-radius: 50%;
  background: #e0484f;
  color: #fff;
  font-size: 8px;
  line-height: 13px;
  text-align: center;
}

.tray {
  margin-left: auto;
  display: flex;
  align-items: center;
  padding-right: 19px;
}

.weather {
  display: flex;
  align-items: center;
  gap: 10px;
  font-size: 13px;
  margin-right: 24px;
}

.weather svg {
  width: 14px;
  height: 32px;
}

.t-ico {
  width: 16px;
  height: 16px;
  margin-right: 8px;
}

.t-caret {
  width: 13px;
  margin-right: 11px;
}

.datetime {
  width: 66px;
  margin-left: -5px;
  display: flex;
  flex-direction: column;
  align-items: center;
  font-size: 11.500px;
  line-height: 18px;
  white-space: nowrap;
}

.notif {
  width: 24px;
  height: 26px;
  margin-left: 8px;
  position: relative;
}

.notif svg {
  width: 17px;
  height: 16px;
  position: absolute;
  left: 0;
  top: 1px;
}

.notif-count {
  position: absolute;
  right: 0;
  bottom: 0;
  width: 16px;
  height: 16px;
  border-radius: 50%;
  background: #ccc;
  border: 1px solid #777;
  font-size: 9px;
  line-height: 14px;
  text-align: center;
}
```
